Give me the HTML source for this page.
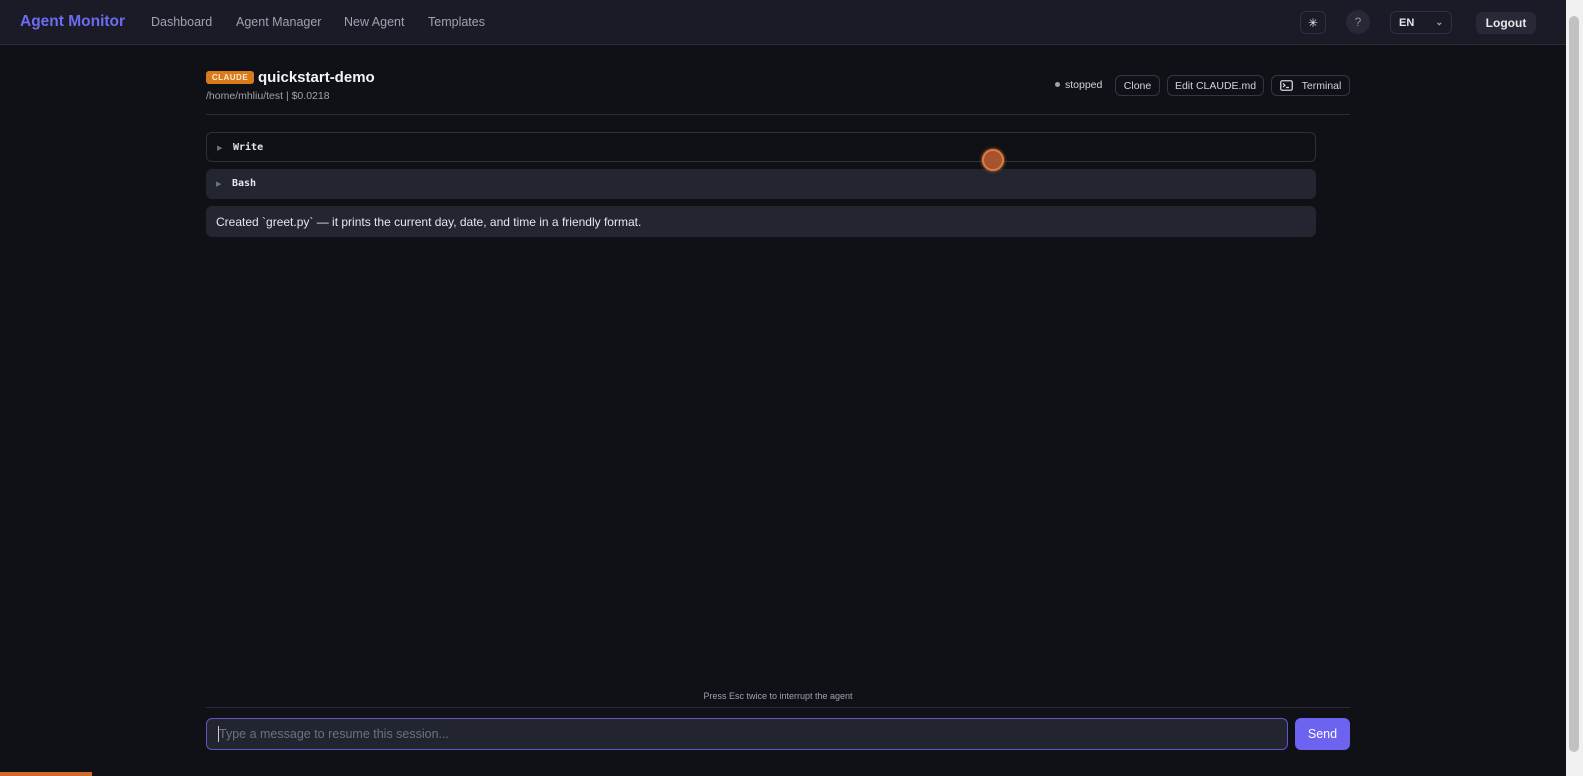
<!DOCTYPE html>
<html><head><style>
*{box-sizing:border-box;margin:0;padding:0}
body{width:1583px;height:776px;overflow:hidden;background:#0f1117;font-family:"Liberation Sans",sans-serif;color:#e5e7eb;position:relative}
.hdr{position:absolute;left:0;top:0;width:1566px;height:45px;background:#1a1b26;border-bottom:1px solid #2a2c38}
.abs{position:absolute}
.nav{font-size:12.5px;color:#9ca3af;top:15px}
.btn{position:absolute;border:1px solid #33364a;border-radius:6px;font-size:10.5px;color:#d1d5db;display:flex;align-items:center;justify-content:center}
.card{position:absolute;left:206px;width:1110px;border-radius:6px}
.mono{font-family:"DejaVu Sans Mono","Liberation Mono",monospace;font-weight:bold;font-size:10px;color:#e5e7eb}
.tri{font-size:7px;color:#6b7280}
</style></head><body>
<div class="hdr">
<div class="abs" style="left:20px;top:13px;font-size:15.5px;font-weight:bold;color:#6c6cf0">Agent Monitor</div>
<div class="abs nav" style="left:151px">Dashboard</div>
<div class="abs nav" style="left:236px">Agent Manager</div>
<div class="abs nav" style="left:344px">New Agent</div>
<div class="abs nav" style="left:428px">Templates</div>
<div class="btn" style="left:1300px;top:11px;width:26px;height:23px;font-size:12px;color:#e5e7eb;border-color:#2d3040">✳</div>
<div class="abs" style="left:1346px;top:10px;width:24px;height:24px;border-radius:50%;background:#272936;color:#8b8f9c;font-size:12px;text-align:center;line-height:24px">?</div>
<div class="btn" style="left:1390px;top:11px;width:62px;height:23px;justify-content:space-between;padding:0 8px;font-size:11px;font-weight:bold;color:#e5e7eb;border-color:#2d3040"><span>EN</span><span style="font-size:9px;color:#aaa">⌄</span></div>
<div class="abs" style="left:1476px;top:12px;width:60px;height:22px;border-radius:6px;background:#272936;font-size:12px;font-weight:bold;text-align:center;line-height:22px">Logout</div>
</div>
<div class="abs" style="left:1566px;top:0;width:17px;height:776px;background:#f1f1f1"></div>
<div class="abs" style="left:1569px;top:16px;width:10px;height:736px;background:#c1c1c1;border-radius:5px"></div>

<div class="abs" style="left:206px;top:71px;width:48px;height:13px;background:#d97a1c;border-radius:3px;font-size:8px;font-weight:bold;color:#fde8cc;text-align:center;line-height:13px;letter-spacing:.5px">CLAUDE</div>
<div class="abs" style="left:258px;top:69px;font-size:15px;font-weight:bold;color:#f3f4f6">quickstart-demo</div>
<div class="abs" style="left:206px;top:90px;font-size:10.5px;color:#9ca3af">/home/mhliu/test | $0.0218</div>
<div class="abs" style="left:1055px;top:82px;width:5px;height:5px;border-radius:50%;background:#9ca3af"></div>
<div class="abs" style="left:1065px;top:79px;font-size:10.5px;color:#d1d5db">stopped</div>
<div class="btn" style="left:1115px;top:75px;width:45px;height:21px">Clone</div>
<div class="btn" style="left:1167px;top:75px;width:97px;height:21px">Edit CLAUDE.md</div>
<div class="btn" style="left:1271px;top:75px;width:79px;height:21px;gap:9px"><svg width="13" height="11" viewBox="0 0 13 11"><rect x="0.75" y="0.75" width="11.5" height="9.5" rx="1.5" fill="none" stroke="#d1d5db" stroke-width="1.3"/><path d="M3 3.5L5 5.3 3 7M6 7.5h3" stroke="#d1d5db" stroke-width="1.2" fill="none"/></svg>Terminal</div>
<div class="abs" style="left:206px;top:114px;width:1144px;height:1px;background:#2a2c38"></div>

<div class="card" style="top:132px;height:30px;border:1px solid #2d303c;background:#0f1117"><span class="abs tri" style="left:10px;top:11px">▶</span><span class="abs mono" style="left:26px;top:9px">Write</span></div>
<div class="card" style="top:169px;height:30px;background:#232530"><span class="abs tri" style="left:10px;top:11px">▶</span><span class="abs mono" style="left:26px;top:9px">Bash</span></div>
<div class="card" style="top:206px;height:31px;background:#232530"><span class="abs" style="left:10px;top:9px;font-size:12px;color:#e5e7eb">Created `greet.py` — it prints the current day, date, and time in a friendly format.</span></div>
<div class="abs" style="left:982px;top:149px;width:22px;height:22px;border-radius:50%;background:#a65430;border:2px solid #e07a3a;box-shadow:0 0 3px #e07a3a"></div>

<div class="abs" style="left:206px;top:691px;width:1144px;text-align:center;font-size:9px;color:#9ca3af">Press Esc twice to interrupt the agent</div>
<div class="abs" style="left:206px;top:707px;width:1144px;height:1px;background:#2a2c38"></div>
<div class="abs" style="left:206px;top:718px;width:1082px;height:32px;border:1px solid #5b57c9;border-radius:6px;background:#222430"><span class="abs" style="left:11px;top:7px;width:1px;height:16px;background:#ccc"></span><span class="abs" style="left:12px;top:8px;font-size:12.5px;color:#6b7280">Type a message to resume this session...</span></div>
<div class="abs" style="left:1295px;top:718px;width:55px;height:32px;border-radius:6px;background:#6c63f0;color:#fff;font-size:12.5px;text-align:center;line-height:32px">Send</div>
<div class="abs" style="left:0;top:772px;width:92px;height:4px;background:#d4692e"></div>
</body></html>
